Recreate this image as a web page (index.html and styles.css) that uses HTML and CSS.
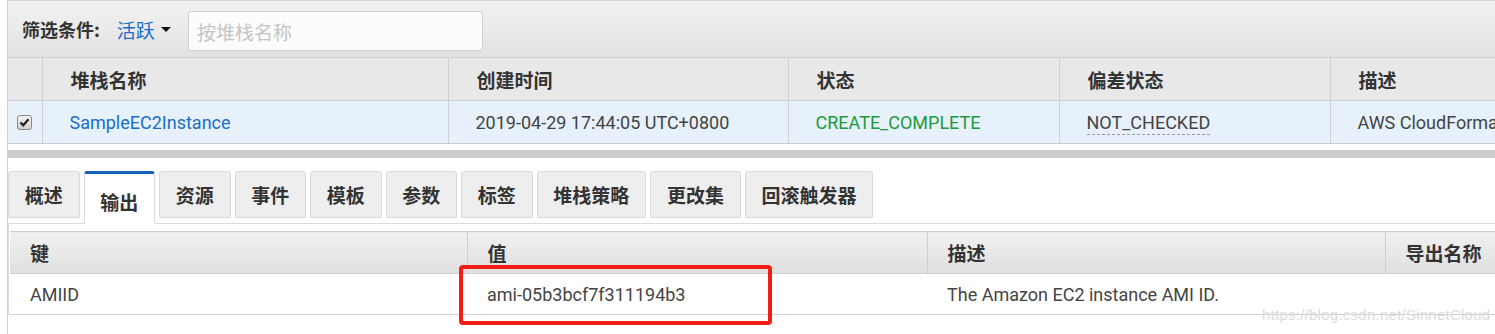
FILE: index.html
```html
<!DOCTYPE html>
<html lang="zh-CN">
<head>
    <meta charset="UTF-8">
    <title>CloudFormation 堆栈</title>
    <link rel="stylesheet" href="styles.css">
</head>
<body>

<div class="console">
    <div class="filter-bar">
        <span class="filter-label">筛选条件:</span>
        <span class="filter-select">活跃<span class="caret"></span></span>
        <input class="filter-input" type="text" placeholder="按堆栈名称">
    </div>

    <table class="stack-table">
        <colgroup>
            <col style="width: 34px">
            <col style="width: 406px">
            <col style="width: 340px">
            <col style="width: 271px">
            <col style="width: 271px">
            <col>
        </colgroup>
        <thead>
            <tr>
                <th></th>
                <th>堆栈名称</th>
                <th>创建时间</th>
                <th>状态</th>
                <th>偏差状态</th>
                <th>描述</th>
            </tr>
        </thead>
        <tbody>
            <tr class="selected">
                <td class="check-cell">
                    <svg width="15" height="15" viewBox="0 0 15 15">
                        <defs>
                            <linearGradient id="cb" x1="0" y1="0" x2="0" y2="1">
                                <stop offset="0" stop-color="#f4f4f4"/>
                                <stop offset="1" stop-color="#cfcfcf"/>
                            </linearGradient>
                        </defs>
                        <rect x="0.5" y="0.5" width="14" height="14" rx="2.5" fill="url(#cb)" stroke="#8a8a8a"/>
                        <path d="M3.5 7.5 L6.2 10.3 L11.5 4.2" fill="none" stroke="#222" stroke-width="2.2"/>
                    </svg>
                </td>
                <td><a class="stack-link" href="#">SampleEC2Instance</a></td>
                <td>2019-04-29 17:44:05 UTC+0800</td>
                <td class="status-ok">CREATE_COMPLETE</td>
                <td><span class="drift">NOT_CHECKED</span></td>
                <td class="clip">AWS CloudForma</td>
            </tr>
        </tbody>
    </table>

    <div class="splitter"></div>

    <div class="tabs">
        <div class="tab">概述</div>
        <div class="tab active">输出</div>
        <div class="tab">资源</div>
        <div class="tab">事件</div>
        <div class="tab">模板</div>
        <div class="tab">参数</div>
        <div class="tab">标签</div>
        <div class="tab">堆栈策略</div>
        <div class="tab">更改集</div>
        <div class="tab">回滚触发器</div>
    </div>

    <div class="tab-panel">
        <table class="output-table">
            <colgroup>
                <col style="width: 457px">
                <col style="width: 460px">
                <col style="width: 458px">
                <col>
            </colgroup>
            <thead>
                <tr>
                    <th>键</th>
                    <th>值</th>
                    <th>描述</th>
                    <th>导出名称</th>
                </tr>
            </thead>
            <tbody>
                <tr>
                    <td>AMIID</td>
                    <td>ami-05b3bcf7f311194b3</td>
                    <td>The Amazon EC2 instance AMI ID.</td>
                    <td></td>
                </tr>
            </tbody>
        </table>
    </div>

    <!-- marca roja y marca de agua encima del contenido -->
    <div class="highlight"></div>
    <div class="watermark">https://blog.csdn.net/SinnetCloud</div>
</div>

</body>
</html>
```

FILE: styles.css
```css
body {
    margin: 0;
    background-color: #fff;
    font-family: Roboto, "Noto Sans CJK SC", sans-serif;
    font-size: 18px;
    color: #444;
    overflow: hidden;
}
.console {
    position: relative;
    margin-left: 7px;
    border-left: 1px solid #d0d0d0;
    height: 334px;
}
.filter-bar {
    height: 56px;
    display: flex;
    align-items: center;
    padding-left: 14px;
    background: linear-gradient(#f2f2f2, #e2e2e2);
    border-top: 1px solid #d6d6d6;
    border-bottom: 1px solid #cfcfcf;
}
.filter-label {
    font-family: "Noto Sans CJK SC", sans-serif;
    font-weight: bold;
    color: #333;
}
.filter-select {
    font-family: "Noto Sans CJK SC", sans-serif;
    font-size: 19px;
    color: #1a6fc4;
    margin-left: 17px;
    display: flex;
    align-items: center;
}
.caret {
    display: inline-block;
    margin-left: 6px;
    border-left: 5px solid transparent;
    border-right: 5px solid transparent;
    border-top: 5px solid #111;
}
.filter-input {
    margin-left: 17px;
    margin-top: 4px;
    width: 295px;
    height: 40px;
    box-sizing: border-box;
    border: 1px solid #cfcfcf;
    border-radius: 3px;
    padding: 0 8px;
    font-family: "Noto Sans CJK SC", sans-serif;
    font-size: 19px;
    background: #fcfcfc;
}
.filter-input::placeholder {
    color: #c4c4c4;
}
.stack-table, .output-table {
    border-collapse: collapse;
    table-layout: fixed;
    width: 100%;
}
.stack-table th {
    height: 42px;
    padding: 0 0 0 28px;
    text-align: left;
    background-color: #e8e8e8;
    border-right: 1px solid #d0d0d0;
    border-bottom: 1px solid #cfcfcf;
    font-family: "Noto Sans CJK SC", sans-serif;
    font-size: 19px;
    font-weight: bold;
    color: #333;
}
.stack-table th:first-child {
    padding: 0;
}
.stack-table td {
    height: 42px;
    padding: 0 0 0 27px;
    background-color: #e6f1fc;
    border-right: 1px solid #d0d0d0;
    border-bottom: 1px solid #cccccc;
    white-space: nowrap;
}
.stack-table td.check-cell {
    padding: 0 0 0 9px;
    line-height: 0;
}
.stack-table td:last-child, .stack-table th:last-child {
    border-right: none;
}
.stack-link {
    color: #1a6fc4;
    text-decoration: none;
}
.status-ok {
    color: #1d9b3b;
}
.drift {
    border-bottom: 1px dashed #999;
    padding-bottom: 1px;
}
.clip {
    overflow: hidden;
}
.splitter {
    margin-top: 6px;
    height: 8px;
    background-color: #cccccc;
}
.tabs {
    margin-top: 13px;
    display: flex;
    align-items: flex-start;
    gap: 4px;
    border-bottom: 1px solid #dcdcdc;
    height: 52px;
}
.tab {
    height: 47px;
    box-sizing: border-box;
    padding: 0 15.75px;
    display: flex;
    align-items: center;
    background-color: #eeeeee;
    border: 1px solid #dadada;
    border-radius: 3px 3px 0 0;
    font-family: "Noto Sans CJK SC", sans-serif;
    font-size: 19px;
    font-weight: bold;
    color: #333;
}
.tab.active {
    height: 53px;
    padding-top: 4px;
    background-color: #fff;
    border-top: 3px solid #1166bb;
    border-bottom: none;
    position: relative;
    z-index: 1;
}
.tab-panel {
    border-left: 1px solid #dcdcdc;
    padding: 7px 0 0 1px;
}
.output-table th {
    height: 41px;
    padding: 0 0 0 20px;
    text-align: left;
    background: linear-gradient(#f1f1f1, #dfdfdf);
    border-top: 1px solid #cfcfcf;
    border-right: 1px solid #cfcfcf;
    border-bottom: 1px solid #cfcfcf;
    font-family: "Noto Sans CJK SC", sans-serif;
    font-size: 19px;
    font-weight: bold;
    color: #333;
}
.output-table th:last-child {
    border-right: none;
}
.output-table td {
    height: 40px;
    padding: 0 0 0 20px;
    border-bottom: 1px solid #cfcfcf;
    white-space: nowrap;
}
.highlight {
    position: absolute;
    left: 451px;
    top: 265px;
    width: 305px;
    height: 52px;
    border: 4px solid #f21d14;
    border-radius: 4px;
}
.watermark {
    position: absolute;
    left: 1254px;
    top: 306px;
    white-space: nowrap;
    font-family: "Liberation Sans", sans-serif;
    font-size: 15px;
    letter-spacing: 0.25px;
    color: #dcdcdc;
}
```
